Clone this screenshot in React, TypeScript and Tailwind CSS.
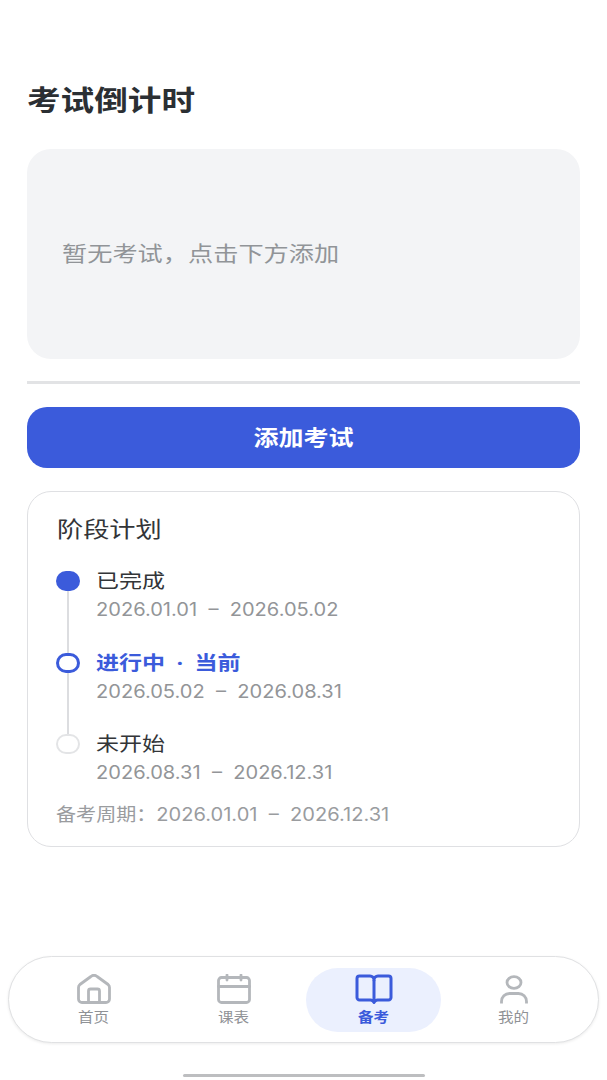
const cjk = "font-['Inter','Noto_Sans_CJK_SC',sans-serif]"

const phases = [
  { title: "已完成", dates: "2026.01.01  –  2026.05.02", state: "done" },
  { title: "进行中  ·  当前", dates: "2026.05.02  –  2026.08.31", state: "active" },
  { title: "未开始", dates: "2026.08.31  –  2026.12.31", state: "todo" },
]

function HomeIcon() {
  return (
    <svg width="34" height="30" viewBox="0 0 34 30" fill="none" stroke="#b4b7bb" strokeWidth="2.8" strokeLinejoin="round">
      <path d="M1.5 13.5c0-1.2.5-2.2 1.4-3l11-8a5 5 0 0 1 6.2 0l11 8c.9.8 1.4 1.8 1.4 3V25a3.5 3.5 0 0 1-3.5 3.5H5A3.5 3.5 0 0 1 1.5 25Z" />
      <path d="M11.5 28.5V17a2 2 0 0 1 2-2h7a2 2 0 0 1 2 2v11.5" />
    </svg>
  )
}

function CalendarIcon() {
  return (
    <svg width="34" height="30" viewBox="0 0 34 30" fill="none" stroke="#b4b7bb" strokeWidth="2.8" strokeLinecap="round">
      <rect x="1.5" y="3.5" width="31" height="25" rx="3" />
      <path d="M1.5 12.5h31M10 1v5M24 1v5" />
    </svg>
  )
}

function BookIcon() {
  return (
    <svg width="38" height="30" viewBox="0 0 38 30" fill="none" stroke="#3b5bdb" strokeWidth="3" strokeLinejoin="round">
      <path d="M19 6a4 4 0 0 0-4-4H4.5A2.5 2.5 0 0 0 2 4.500v19A2.500 2.500 0 0 0 4.500 26H15a4 4 0 0 1 4 2.500 4 4 0 0 1 4-2.500h10.500a2.500 2.500 0 0 0 2.500-2.500v-19A2.500 2.500 0 0 0 33.500 2H23a4 4 0 0 0-4 4Z" />
      <path d="M19 6v22" />
    </svg>
  )
}

function UserIcon() {
  return (
    <svg width="28" height="30" viewBox="0 0 28 30" fill="none" stroke="#b4b7bb" strokeWidth="2.800">
      <ellipse cx="14" cy="8.500" rx="7" ry="5.800" />
      <path d="M1.500 29.500v-2a8 8 0 0 1 8-8h9a8 8 0 0 1 8 8v2" />
    </svg>
  )
}

function PhaseDot({ state }: { state: string }) {
  if (state === "done") return <div className="h-5 w-6 shrink-0 rounded-full bg-[#3b5bdb]" />
  if (state === "active") return <div className="h-5 w-6 shrink-0 rounded-full border-[3px] border-[#3b5bdb] bg-white" />
  return <div className="h-5 w-6 shrink-0 rounded-full border-2 border-[#e3e4e6] bg-white" />
}

function NavItem({ label, active, children }: { label: string; active?: boolean; children: React.ReactNode }) {
  return (
    <div className={`flex h-16 w-[135px] flex-col items-center justify-start rounded-[32px] pt-[6px] ${active ? "bg-[#ebf0fe]" : ""}`}>
      {children}
      <span className={`mt-[3px] scale-x-[1.15] text-[13.5px] leading-5 ${active ? "font-bold text-[#3b5bdb]" : "text-[#8f9296]"}`}>
        {label}
      </span>
    </div>
  )
}

export default function App() {
  return (
    <div className={`flex min-h-[1080px] flex-col overflow-hidden bg-white ${cjk}`}>
      <main className="flex flex-col px-[27px] pt-[83px]">
        {/* Title */}
        <h1 className="origin-left scale-x-[1.2] text-[28px] leading-9 font-bold whitespace-nowrap text-[#2b2f33]">考试倒计时</h1>

        {/* Empty state */}
        <div className="mt-[30px] flex h-[210px] items-center rounded-[24px] bg-[#f3f4f6] px-[35px]">
          <p className="origin-left scale-x-[1.2] text-[21px] leading-7 whitespace-nowrap text-[#919498]">暂无考试，点击下方添加</p>
        </div>
        <div className="mt-[22px] h-[3px] bg-[#e2e3e5]" />

        <button className="mt-[23px] h-[61px] rounded-[20px] bg-[#3b5bdb] text-white">
          <span className="block scale-x-[1.19] text-[21px] font-bold">添加考试</span>
        </button>

        {/* Phases */}
        <section className="mt-[23px] flex h-[356px] flex-col rounded-[24px] border-[1.5px] border-[#dfe0e3] pt-[22px] pl-[28px]">
          <h2 className="origin-left translate-x-[1px] scale-x-[1.19] text-[22px] leading-[30px] whitespace-nowrap text-[#333538]">阶段计划</h2>
          <div className="mt-[27px] flex flex-col">
            {phases.map((phase, i) => (
              <div key={phase.title} className={`flex gap-[17px] ${i < 2 ? "h-[81.5px]" : "h-[62px]"}`}>
                <div className="flex w-6 flex-col items-center">
                  <PhaseDot state={phase.state} />
                  {i < 2 && <div className="w-[2px] flex-1 bg-[#dcdde0]" />}
                </div>
                <div className="-mt-[4px] flex flex-col">
                  <span className={`origin-left -translate-x-[1px] scale-x-[1.18] text-[19.5px] leading-7 whitespace-pre ${phase.state === "active" ? "font-bold text-[#3b5bdb]" : "text-[#333538]"}`}>
                    {phase.title}
                  </span>
                  <span className="mt-[1px] origin-left -translate-x-[1px] scale-x-[1.115] text-[18px] leading-7 whitespace-pre text-[#939598]">{phase.dates}</span>
                </div>
              </div>
            ))}
          </div>
          <p className="mt-[5px] origin-left scale-x-[1.115] text-[18px] leading-7 whitespace-pre text-[#9a9c9f]">备考周期：2026.01.01  –  2026.12.31</p>
        </section>
      </main>

      {/* Bottom nav */}
      <nav className="mx-2 mt-auto flex h-[87px] items-center justify-center rounded-[44px] border-[1.5px] border-[#e0e1e3] bg-white shadow-[0_1px_3px_rgba(0,0,0,0.08)]">
        <NavItem label="首页"><HomeIcon /></NavItem>
        <div className="w-[5px]" />
        <NavItem label="课表"><CalendarIcon /></NavItem>
        <div className="w-[5px]" />
        <NavItem label="备考" active><BookIcon /></NavItem>
        <div className="w-[5px]" />
        <NavItem label="我的"><UserIcon /></NavItem>
      </nav>
      <div className="mt-[31px] mb-[3px] h-[3px] w-[242px] self-center rounded-full bg-[#bdbec0]" />
    </div>
  )
}
